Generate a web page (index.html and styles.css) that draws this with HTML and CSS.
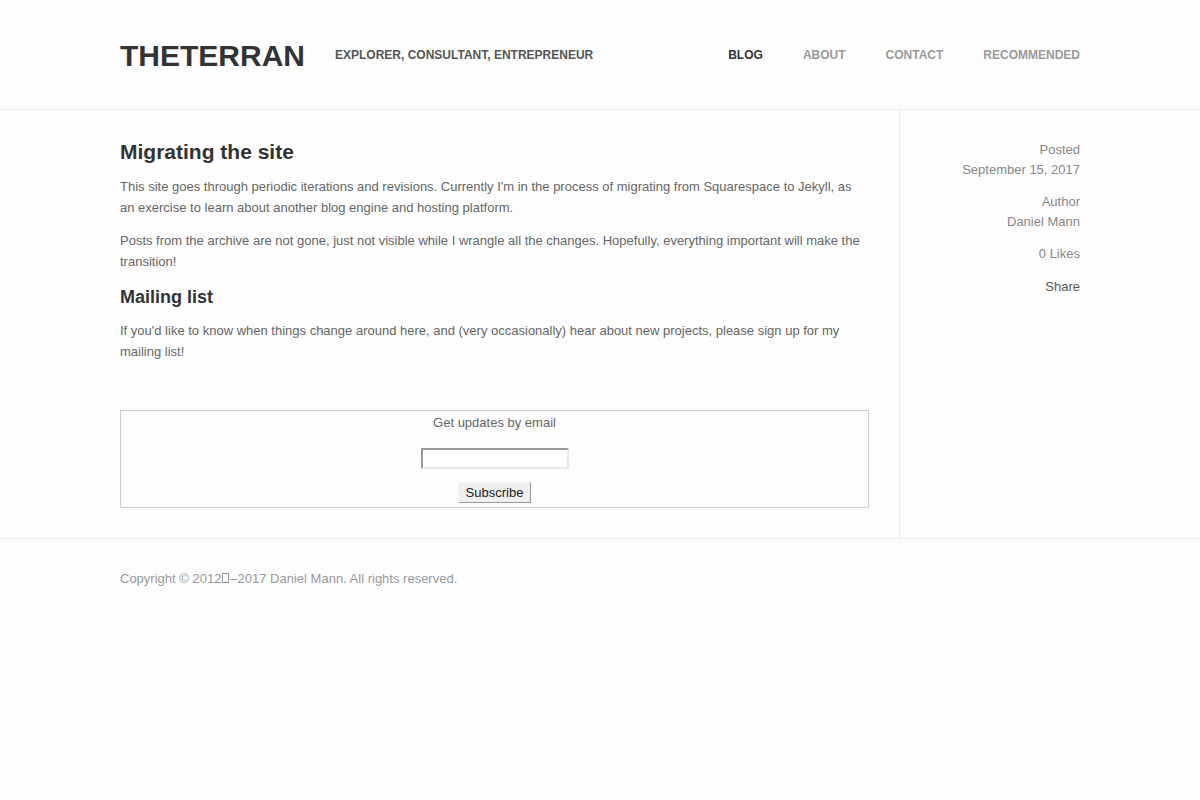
FILE: index.html
```html
<!DOCTYPE html>
<html lang="en">
<head>
  <meta charset="UTF-8">
  <meta name="viewport" content="width=device-width, initial-scale=1.0">
  <title>Migrating the site - TheTerran</title>
  <link rel="stylesheet" href="styles.css">
</head>
<body>

  <header class="site-header">
    <div class="wrap header-inner">
      <a class="logo" href="#">THETERRAN</a>
      <span class="tagline">Explorer, Consultant, Entrepreneur</span>
      <nav class="nav">
        <a class="active" href="#">Blog</a>
        <a href="#">About</a>
        <a href="#">Contact</a>
        <a href="#">Recommended</a>
      </nav>
    </div>
  </header>

  <div class="wrap page">
    <article class="post">
      <h1>Migrating the site</h1>
      <p>This site goes through periodic iterations and revisions. Currently I'm in the process of migrating from Squarespace to Jekyll, as an exercise to learn about another blog engine and hosting platform.</p>
      <p>Posts from the archive are not gone, just not visible while I wrangle all the changes. Hopefully, everything important will make the transition!</p>
      <h2>Mailing list</h2>
      <p>If you'd like to know when things change around here, and (very occasionally) hear about new projects, please sign up for my mailing list!</p>

      <form class="signup">
        <label for="email">Get updates by email</label>
        <input type="text" id="email" name="email">
        <button type="submit">Subscribe</button>
      </form>
    </article>

    <aside class="meta">
      <div class="meta-item">
        <span class="label">Posted</span>
        <span>September 15, 2017</span>
      </div>
      <div class="meta-item">
        <span class="label">Author</span>
        <span>Daniel Mann</span>
      </div>
      <div class="meta-item">0 Likes</div>
      <div class="meta-item share">Share</div>
    </aside>
  </div>

  <footer class="site-footer">
    <div class="wrap">
      Copyright &copy; 2012<span class="tofu"></span>&ndash;2017 Daniel Mann. All rights reserved.
    </div>
  </footer>

</body>
</html>
```

FILE: styles.css
```css
body {
  font-family: "Liberation Sans", Arial, sans-serif;
  font-size: 13px;
  line-height: 21px;
  color: #666;
  background-color: #fdfdfd;
  margin: 0;
}
a {
  text-decoration: none;
}
.wrap {
  width: 960px;
  margin: 0 auto;
}

/* header */
.site-header {
  border-bottom: 1px solid #ececec;
}
.header-inner {
  display: flex;
  align-items: center;
  height: 107px;
  padding-top: 2px;
}
.logo {
  font-size: 30px;
  font-weight: bold;
  color: #333;
  line-height: 34px;
}
.tagline {
  margin-left: 30px;
  font-size: 12px;
  font-weight: bold;
  text-transform: uppercase;
  color: #555;
}
.nav {
  margin-left: auto;
  display: flex;
  gap: 40px;
}
.nav a {
  font-size: 12px;
  font-weight: bold;
  text-transform: uppercase;
  color: #999;
}
.nav a.active {
  color: #333;
}

/* content */
.page {
  display: flex;
}
.post {
  width: 749px;
  padding: 30px 30px 30px 0;
  border-right: 1px solid #ececec;
}
.post h1 {
  font-size: 21px;
  line-height: 24px;
  color: #333;
  margin: 0 0 12px;
}
.post h2 {
  font-size: 18px;
  line-height: 22px;
  color: #333;
  margin: 14px 0 12px;
}
.post p {
  margin: 0 0 12px;
}

.signup {
  margin-top: 48px;
  border: 1px solid #ccc;
  display: flex;
  flex-direction: column;
  align-items: center;
  padding: 1px 0 4px;
}
.signup label {
  line-height: 22px;
}
.signup input {
  margin-top: 14px;
  width: 142px;
  height: 17px;
  padding: 0 1px;
  border: 2px solid #e8e8e8;
  border-top-color: #999;
  border-left-color: #999;
  background: #fff;
  font: 13px "Liberation Sans", Arial, sans-serif;
}
.signup button {
  margin-top: 13px;
  width: 73px;
  height: 21px;
  padding: 0;
  border: 1px solid #bbb;
  border-top-color: #f4f4f4;
  border-left-color: #f4f4f4;
  border-right-color: #999;
  border-bottom-color: #999;
  background: #efefef;
  color: #222;
  font: 13px "Liberation Sans", Arial, sans-serif;
}

/* sidebar */
.meta {
  flex: 1;
  text-align: right;
  padding-top: 30px;
  line-height: 20px;
  color: #888;
}
.meta-item {
  margin-bottom: 12px;
}
.meta-item span {
  display: block;
}
.meta .share {
  color: #555;
  margin-top: 13px;
}

/* footer */
.site-footer {
  border-top: 1px solid #ececec;
  padding-top: 29px;
  color: #999;
}
.tofu {
  display: inline-block;
  width: 5px;
  height: 8px;
  border: 1px solid #999;
  margin: 0 1px;
}
```
